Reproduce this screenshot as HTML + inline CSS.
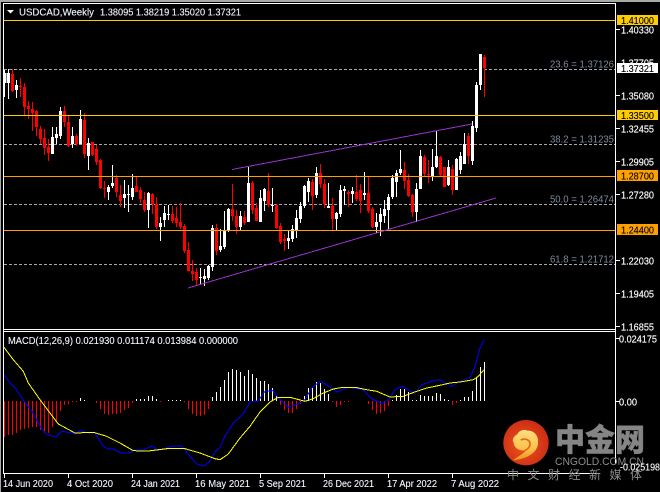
<!DOCTYPE html>
<html><head><meta charset="utf-8"><style>
html,body{margin:0;padding:0;background:#000;width:660px;height:492px;overflow:hidden}
svg{display:block}
text{font-family:"Liberation Sans","Noto Sans CJK SC",sans-serif}
</style></head><body>
<svg xmlns="http://www.w3.org/2000/svg" width="660" height="492" viewBox="0 0 660 492">
<defs>
<radialGradient id="c" cx="45%" cy="55%" r="60%"><stop offset="0" stop-color="#f0561c"/><stop offset="1" stop-color="#c82a14"/></radialGradient>
<linearGradient id="s" x1="0" y1="0" x2="0" y2="1"><stop offset="0" stop-color="#ffdd80"/><stop offset=".6" stop-color="#fbc44c"/><stop offset="1" stop-color="#ee9420"/></linearGradient>
</defs>
<rect width="660" height="492" fill="#000"/>
<g shape-rendering="crispEdges">
<rect x="0" y="0" width="660" height="2" fill="#a8a8a8"/>
<rect x="0" y="0" width="1" height="492" fill="#a8a8a8"/>
<rect x="3" y="3" width="613" height="1" fill="#fff"/>
<rect x="3" y="3" width="1" height="471" fill="#fff"/>
<rect x="615" y="3" width="1" height="461" fill="#fff"/>
<rect x="3" y="329" width="613" height="1" fill="#fff"/>
<rect x="3" y="331" width="613" height="1" fill="#fff"/>
<rect x="3" y="473" width="597" height="1" fill="#fff"/>

<path d="M4 69.5H615M4 144.5H615M4 204.5H615M4 264.5H615" stroke="#a8a8a8" stroke-width="1" stroke-dasharray="3 2" fill="none"/>

<path fill="none" stroke="#fff" stroke-width="1" d="M4.5 70V97M8.5 69V99M16.5 80V98M52.5 127V154M56.5 127V144M60.5 107V139M72.5 127V148M80.5 110V144M88.5 138V170M108.5 185V200M112.5 165V188M124.5 180V208M128.5 185V212M132.5 174V200M148.5 192V228M160.5 217V241M164.5 206V227M168.5 205V220M200.5 268V284M204.5 269V286M208.5 265V280M212.5 225V271M220.5 229V252M224.5 211V249M228.5 208V232M240.5 211V230M248.5 166V222M260.5 190V222M264.5 188V211M272.5 188V212M288.5 231V249M292.5 225V242M296.5 210V238M300.5 202V223M304.5 185V208M308.5 178V202M316.5 167V198M328.5 183V208M336.5 212V230M340.5 185V217M344.5 186V205M352.5 187V203M364.5 172V200M376.5 213V233M380.5 208V236M384.5 200V223M388.5 194V229M392.5 175V199M396.5 170V197M400.5 150V175M416.5 183V222M420.5 150V189M432.5 149V181M436.5 131V168M448.5 160V186M456.5 158V190M460.5 152V174M464.5 133V164M472.5 121V165M476.5 82V132M480.5 54V90"/>
<path fill="none" stroke="#fff" stroke-width="3" d="M5 73V83M8.5 73V83M16.5 85V90M52.5 137V154M56.5 134V138M60.5 111V136M72.5 136V144M80.5 119V144M88.5 143V156M108.5 187V192M112.5 183V186M124.5 194V198M128.5 194V195M132.5 188V197M148.5 193V210M160.5 223V227M164.5 213V220M168.5 214V215M200.5 277V278M204.5 276V279M208.5 266V278M212.5 228V267M220.5 246V250M224.5 230V247M228.5 209V231M240.5 216V227M248.5 183V222M260.5 198V222M264.5 189V201M272.5 205V206M288.5 238V241M292.5 229V239M296.5 218V230M300.5 206V219M304.5 186V206M308.5 181V192M316.5 173V195M328.5 206V208M336.5 213V219M340.5 190V214M344.5 189V191M352.5 191V194M364.5 193V195M376.5 222V227M380.5 214V222M384.5 209V216M388.5 197V210M392.5 178V197M396.5 173V182M400.5 169V173M416.5 189V212M420.5 156V189M432.5 167V177M436.5 156V167M448.5 167V185M456.5 159V190M460.5 156V170M464.5 144V164M472.5 126V161M476.5 85V128M480.5 54V85"/>
<path fill="none" stroke="#f00" stroke-width="1" d="M12.5 69V92M20.5 78V97M24.5 83V115M28.5 101V119M32.5 102V131M36.5 110V136M40.5 126V144M44.5 129V155M48.5 139V161M64.5 106V127M68.5 116V147M76.5 134V146M84.5 113V158M92.5 142V156M96.5 145V165M100.5 159V189M104.5 181V198M116.5 175V197M120.5 185V207M136.5 177V192M140.5 187V203M144.5 192V212M152.5 193V214M156.5 197V229M172.5 206V223M176.5 207V227M180.5 203V229M184.5 224V253M188.5 242V271M192.5 260V281M196.5 268V285M216.5 224V255M232.5 184V221M236.5 210V234M244.5 211V225M252.5 181V214M256.5 203V221M268.5 173V207M276.5 204V229M280.5 223V244M284.5 234V251M312.5 179V210M320.5 164V188M324.5 179V208M332.5 198V230M348.5 190V207M356.5 175V201M360.5 184V213M368.5 177V213M372.5 207V228M404.5 162V189M408.5 174V197M412.5 194V217M424.5 155V176M428.5 160V183M440.5 156V177M444.5 167V187M452.5 165V195M468.5 133V164M484.5 55V97"/>
<path fill="none" stroke="#f00" stroke-width="3" d="M12.5 74V91M20.5 86V87M24.5 87V107M28.5 106V109M32.5 109V113M36.5 111V127M40.5 129V139M44.5 138V148M48.5 147V153M64.5 111V122M68.5 122V146M76.5 136V144M84.5 120V154M92.5 142V155M96.5 149V162M100.5 160V188M104.5 188V189M116.5 178V192M120.5 195V201M136.5 186V192M140.5 190V199M144.5 200V210M152.5 194V204M156.5 204V227M172.5 214V221M176.5 218V223M180.5 222V227M184.5 226V251M188.5 250V271M192.5 271V274M196.5 272V280M216.5 228V251M232.5 209V216M236.5 216V227M244.5 217V223M252.5 183V210M256.5 208V221M268.5 191V205M276.5 205V228M280.5 226V242M284.5 239V241M312.5 182V196M320.5 173V184M324.5 184V204M332.5 206V219M348.5 192V194M356.5 192V199M360.5 190V201M368.5 193V211M372.5 209V227M404.5 170V181M408.5 180V196M412.5 195V212M424.5 157V174M428.5 174V175M440.5 157V175M444.5 167V187M452.5 169V190M468.5 136V156M484.5 57V68"/>

<rect x="4" y="20" width="611" height="1" fill="#ffcc00"/>
<rect x="4" y="115" width="611" height="1" fill="#ffcc00"/>
<rect x="4" y="176" width="611" height="1" fill="#ffa000"/>
<rect x="4" y="230" width="611" height="1" fill="#ffa000"/>

<path d="M232 169.5L472 124M188 288L496 198" stroke="#9932cc" stroke-width="1" fill="none"/>

<path fill="none" stroke="#f00" stroke-width="1" d="M4.5 401v36M8.5 401v34M12.5 401v34M16.5 401v32M20.5 401v29M24.5 401v28M28.5 401v27M32.5 401v26M36.5 401v26M40.5 401v29M44.5 401v32M48.5 401v32M52.5 401v26M56.5 401v21M60.5 401v10M64.5 401v4M68.5 401v3M72.5 401v1M76.5 401v1M96.5 401v2M100.5 401v8M104.5 401v13M108.5 401v14M112.5 401v13M116.5 401v13M120.5 401v12M124.5 401v9M128.5 401v7M132.5 401v2M160.5 401v1M184.5 401v1M188.5 401v8M192.5 401v13M196.5 401v15M200.5 401v15M204.5 401v14M208.5 401v8M280.5 401v4M284.5 401v9M288.5 401v12M292.5 401v12M296.5 401v8M300.5 401v3M332.5 401v1M336.5 401v6M340.5 401v4M344.5 401v1M348.5 401v1M368.5 401v3M372.5 401v9M376.5 401v13M380.5 401v12M384.5 401v10M388.5 401v5M452.5 401v4M456.5 401v2"/>
<path fill="none" stroke="#fff" stroke-width="1" d="M80.5 401v-3M84.5 401v-1M136.5 401v-2M140.5 401v-2M144.5 401v-2M148.5 401v-5M152.5 401v-5M156.5 401v-2M168.5 401v-1M172.5 401v-1M176.5 401v-1M180.5 401v-1M212.5 401v-4M216.5 401v-9M220.5 401v-14M224.5 401v-21M228.5 401v-29M232.5 401v-32M236.5 401v-31M240.5 401v-29M244.5 401v-25M248.5 401v-31M252.5 401v-27M256.5 401v-23M260.5 401v-20M264.5 401v-20M268.5 401v-17M272.5 401v-13M276.5 401v-5M304.5 401v-5M308.5 401v-13M312.5 401v-14M316.5 401v-19M320.5 401v-18M324.5 401v-12M328.5 401v-7M392.5 401v-1M396.5 401v-6M400.5 401v-12M404.5 401v-12M408.5 401v-9M412.5 401v-1M416.5 401v-1M420.5 401v-6M424.5 401v-5M428.5 401v-5M432.5 401v-5M436.5 401v-8M440.5 401v-7M444.5 401v-2M448.5 401v-1M460.5 401v-1M464.5 401v-4M468.5 401v-4M472.5 401v-10M476.5 401v-23M480.5 401v-34M484.5 401v-39"/>

<path fill="#fff" d="M616 29h4v1h-4zM616 95h4v1h-4zM616 128h4v1h-4zM616 161h4v1h-4zM616 194h4v1h-4zM616 260h4v1h-4zM616 293h4v1h-4zM616 326h4v1h-4zM616 338h4v1h-4zM616 401h4v1h-4zM4 474h1v4h-1zM68 474h1v4h-1zM132 474h1v4h-1zM196 474h1v4h-1zM260 474h1v4h-1zM324 474h1v4h-1zM388 474h1v4h-1zM452 474h1v4h-1z"/>

<rect x="617" y="15" width="41" height="10" fill="#ffcc00"/>
<rect x="617" y="110" width="41" height="10" fill="#ffcc00"/>
<rect x="617" y="170" width="41" height="11" fill="#ffa000"/>
<rect x="617" y="224" width="41" height="11" fill="#ffa000"/>
</g>

<g shape-rendering="crispEdges" fill="none" stroke-width="1">
<polyline stroke="#0000ff" points="4,374.7 10,383 16,389 24,401.3 32,411.3 40,426.3 46.7,434.7 56,437 61.7,431.3 66.7,432 75,434 80,430.7 86.7,432.7 95,433 103.3,446.3 108.3,449 113.3,449 121.7,453.3 130,452.7 135,450 143.3,450 151.7,446 159.3,450.3 168.3,447.3 175,446 181.7,446 190,456.3 196.7,464 204,466 210,461.3 215,452 220,447.3 225,436.3 233.3,423 243.3,414 250,402 258.3,400.7 265,391.3 273.3,390.7 278.3,398 288.3,407.3 298.3,404 305,399.7 311.7,388 320,381.3 326.7,384.7 336.7,392 348.3,387.3 363.3,389.7 371.7,398.7 381.7,403.7 388.3,399.7 395,389.7 402.7,386.3 411.7,392.3 416.7,391.3 421.7,384.7 433.3,380.7 440,379.7 445,383 451.7,386.3 460,381.3 470,377.3 475,366.3 480,348 484,339.7"/>
<polyline stroke="#ffff00" points="4,347.3 13.3,359.7 23.3,371.3 28.3,383 40,399.7 50,413 58.3,424 75,433 93.3,432.3 106.7,436.3 120,443 133.3,450.7 148.3,451 166.7,448.7 185,448.7 200,453 215,458.7 220,459.7 228.3,454 240,438 250,426.3 260,412 270,402 278.3,397.3 290,397.3 305,401.3 313.3,398.7 323.3,393 333.3,389 343.3,387.3 355,387.3 366.7,389.7 376.7,391.3 390,397 403.3,396.3 416.7,391.3 426.7,388 440,385.3 450,383 460,382 473.3,379.7 478.3,376.3 484,369.7"/>
</g>

<!-- axis text -->
<g font-size="10.5" fill="#fff" stroke="#fff" stroke-width=".15">
<text x="621" y="33.500" textLength="33" lengthAdjust="spacingAndGlyphs">1.40330</text>
<text x="621" y="66.500" textLength="33" lengthAdjust="spacingAndGlyphs">1.37705</text>
<text x="621" y="99.500" textLength="33" lengthAdjust="spacingAndGlyphs">1.35080</text>
<text x="621" y="132.500" textLength="33" lengthAdjust="spacingAndGlyphs">1.32455</text>
<text x="621" y="165.500" textLength="33" lengthAdjust="spacingAndGlyphs">1.29905</text>
<text x="621" y="198.500" textLength="33" lengthAdjust="spacingAndGlyphs">1.27280</text>
<text x="621" y="264.500" textLength="33" lengthAdjust="spacingAndGlyphs">1.22030</text>
<text x="621" y="297.500" textLength="33" lengthAdjust="spacingAndGlyphs">1.19405</text>
<text x="621" y="330.500" textLength="33" lengthAdjust="spacingAndGlyphs">1.16855</text>
<text x="619" y="342.500" textLength="38" lengthAdjust="spacingAndGlyphs">0.024175</text>
<text x="619" y="405.500" textLength="18" lengthAdjust="spacingAndGlyphs">0.00</text>
</g>
<rect x="617" y="63" width="41" height="10" fill="#fff" shape-rendering="crispEdges"/>
<g font-size="10.5" fill="#000" stroke="#000" stroke-width=".12">
<text x="621" y="72" textLength="33" lengthAdjust="spacingAndGlyphs">1.37321</text>
<text x="621" y="24" textLength="33" lengthAdjust="spacingAndGlyphs">1.41000</text>
<text x="621" y="119" textLength="33" lengthAdjust="spacingAndGlyphs">1.33500</text>
<text x="621" y="179.500" textLength="33" lengthAdjust="spacingAndGlyphs">1.28700</text>
<text x="621" y="233.500" textLength="33" lengthAdjust="spacingAndGlyphs">1.24400</text>
</g>

<g font-size="10.5" fill="#7b8a9a">
<text x="550" y="67.500" textLength="64" lengthAdjust="spacingAndGlyphs">23.6 = 1.37126</text>
<text x="550" y="142.500" textLength="64" lengthAdjust="spacingAndGlyphs">38.2 = 1.31235</text>
<text x="550" y="202.500" textLength="64" lengthAdjust="spacingAndGlyphs">50.0 = 1.26474</text>
<text x="550" y="262.500" textLength="64" lengthAdjust="spacingAndGlyphs">61.8 = 1.21712</text>
</g>

<path d="M7 10h7l-3.500 3.500z" fill="#fff"/>
<g font-size="10.5" fill="#f2f6ff" stroke="#f2f6ff" stroke-width=".12">
<text x="19" y="15.500" textLength="75" lengthAdjust="spacingAndGlyphs">USDCAD,Weekly</text>
<text x="100" y="15.500" textLength="141" lengthAdjust="spacingAndGlyphs">1.38095 1.38219 1.35020 1.37321</text>
<text x="8" y="344" textLength="230" lengthAdjust="spacingAndGlyphs">MACD(12,26,9) 0.021930 0.011174 0.013984 0.000000</text>
<text x="3" y="487" textLength="50" lengthAdjust="spacingAndGlyphs">14 Jun 2020</text>
<text x="67" y="487" textLength="46" lengthAdjust="spacingAndGlyphs">4 Oct 2020</text>
<text x="131" y="487" textLength="49" lengthAdjust="spacingAndGlyphs">24 Jan 2021</text>
<text x="195" y="487" textLength="55" lengthAdjust="spacingAndGlyphs">16 May 2021</text>
<text x="259" y="487" textLength="47" lengthAdjust="spacingAndGlyphs">5 Sep 2021</text>
<text x="323" y="487" textLength="51" lengthAdjust="spacingAndGlyphs">26 Dec 2021</text>
<text x="387" y="487" textLength="50" lengthAdjust="spacingAndGlyphs">17 Apr 2022</text>
<text x="451" y="487" textLength="48" lengthAdjust="spacingAndGlyphs">7 Aug 2022</text>
</g>

<!-- logo -->
<circle cx="526" cy="442.700" r="22.700" fill="url(#c)"/>
<g transform="translate(498 416) scale(.3333)">
<path d="M44 133C62 120 78 112 84 103C66 106 48 98 47 80C40 70 50 58 58 55C62 44 78 38 88 44C104 42 122 56 120 78C122 100 100 128 44 133Z" fill="url(#s)"/>
<path d="M68 72C82 65 98 72 96 86C94 96 88 100 80 104" fill="none" stroke="#e8641c" stroke-width="5"/>
</g>
<text x="555" y="451" font-size="31" font-weight="900" fill="#858585" stroke="#858585" stroke-width=".4" style="font-family:'Noto Sans CJK SC',sans-serif" textLength="90" lengthAdjust="spacingAndGlyphs">中金网</text>
<text x="555" y="465" font-size="11" fill="#8c8c8c" textLength="89" lengthAdjust="spacingAndGlyphs">CNGOLD.COM.CN</text>
<text x="507" y="479" font-size="12" fill="#8c8c8c" style="font-family:'Noto Sans CJK SC',sans-serif" textLength="135">中 文 财 经 新 媒 体</text>
<text x="620" y="470.500" font-size="10.500" fill="#fff" stroke="#fff" stroke-width=".12" textLength="40" lengthAdjust="spacingAndGlyphs">-0.025198</text>
</svg>
</body></html>
